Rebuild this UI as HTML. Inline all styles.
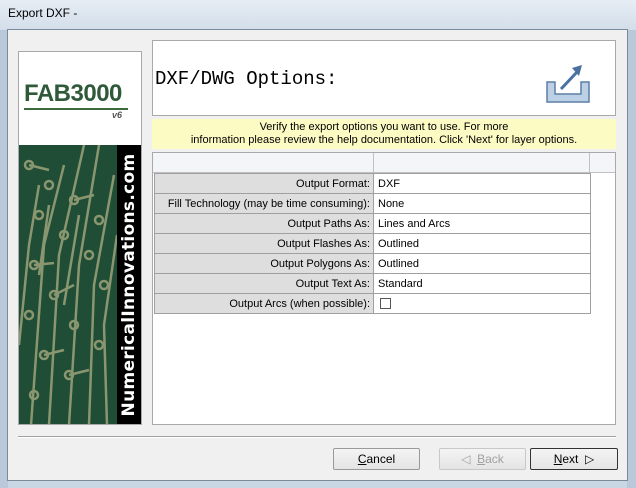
<!DOCTYPE html>
<html><head><style>
*{margin:0;padding:0;box-sizing:border-box}
body{width:636px;height:488px;overflow:hidden;background:#c9d6e3;font-family:"Liberation Sans",sans-serif;font-size:11px;position:relative}
.abs{position:absolute}
.btn{position:absolute;top:448px;height:22px;border:1px solid #9a9a9a;background:linear-gradient(#f4f4f4,#e4e4e4);text-align:center;line-height:20px;font-size:12px;border-radius:2px}
.row{position:absolute;left:155px;width:436px;height:20px;border-bottom:1px solid #a0a0a0}
.row .l{position:absolute;left:0;width:219px;height:19px;background:#dedede;text-align:right;padding-right:3px;line-height:20px;border-right:1px solid #a0a0a0}
.row .v{position:absolute;left:220px;width:216px;height:19px;background:#fff;padding-left:3px;line-height:20px;border-right:1px solid #a0a0a0}
</style></head><body>
<div class="abs" style="left:0;top:0;width:636px;height:30px;background:linear-gradient(#e6edf4,#d3deea)"></div>
<div class="abs" style="left:8px;top:6px;font-size:12px;color:#000">Export DXF -</div>
<div class="abs" style="left:0;top:30px;width:8px;height:458px;background:#b9c9d9"></div>
<div class="abs" style="left:627px;top:30px;width:9px;height:458px;background:#b9c9d9"></div>
<div class="abs" style="left:7px;top:29px;width:621px;height:452px;background:#f0f0f0;border:1px solid #7a8a9a"></div>
<div class="abs" style="left:18px;top:51px;width:124px;height:374px;border:1px solid #a9a9a9;background:#fff;overflow:hidden">
 <div class="abs" style="left:5px;top:28px;font-size:24px;font-weight:bold;color:#2f5a3a;letter-spacing:-0.5px">FAB3000</div>
 <div class="abs" style="left:5px;top:56px;width:104px;height:2px;background:#3a6a3e"></div>
 <div class="abs" style="left:93px;top:58px;font-size:9px;font-style:italic;font-weight:bold;color:#555">v6</div>
 <div class="abs" style="left:0;top:93px;width:98px;height:280px;background:#1f4d35">
  <svg width="98" height="280" style="position:absolute;left:0;top:0" fill="none" stroke="#8a9670" stroke-width="2.5">
   <path d="M80 0 L60 120 L50 280 M65 0 L40 110 L30 280 M45 20 L25 100 L12 280 M20 40 L10 100 L0 200 M95 30 L75 140 L70 280 M98 90 L85 180 L88 280 M30 60 L20 130 M60 70 L45 160 M10 20 L30 25 M55 55 L75 50 M15 120 L35 118 M35 150 L55 140 M50 230 L70 225 M25 210 L45 205"/>
   <circle cx="10" cy="20" r="4"/><circle cx="30" cy="40" r="4"/><circle cx="55" cy="55" r="4"/><circle cx="20" cy="70" r="4"/><circle cx="80" cy="75" r="4"/><circle cx="45" cy="90" r="4"/><circle cx="15" cy="120" r="4"/><circle cx="70" cy="110" r="4"/><circle cx="35" cy="150" r="4"/><circle cx="85" cy="140" r="4"/><circle cx="10" cy="170" r="4"/><circle cx="55" cy="180" r="4"/><circle cx="25" cy="210" r="4"/><circle cx="80" cy="200" r="4"/><circle cx="50" cy="230" r="4"/><circle cx="15" cy="250" r="4"/>
  </svg>
 </div>
 <div class="abs" style="left:98px;top:93px;width:24px;height:280px;background:#000"></div>
 <div class="abs" style="left:110px;top:233px;width:0;height:0">
  <div style="position:absolute;transform:translate(-50%,-50%) rotate(-90deg);white-space:nowrap;color:#fff;font-weight:bold;font-size:17px;font-family:'DejaVu Sans',sans-serif;letter-spacing:0.3px">NumericalInnovations.com</div>
 </div>
</div>
<div class="abs" style="left:152px;top:40px;width:464px;height:76px;background:#fff;border:1px solid #a9a9a9"></div>
<div class="abs" style="left:155px;top:68px;font-family:'Liberation Mono',monospace;font-size:19px">DXF/DWG Options:</div>
<svg class="abs" style="left:544px;top:62px" width="50" height="44" fill="none">
 <path d="M3 20 v20 h42 v-20 h-8 v12 h-26 v-12 z" fill="#bcd0e6" stroke="#5c7fa6" stroke-width="1.5"/>
 <path d="M17 27 L34 9" stroke="#4a72a0" stroke-width="3"/>
 <path d="M28 6 L38 3 L35 14 z" fill="#4a72a0"/>
</svg>
<div class="abs" style="left:152px;top:119px;width:464px;height:30px;background:#fdfbc4;text-align:center;font-size:11px;line-height:13px;padding-top:2px">Verify the export options you want to use. For more<br>information please review the help documentation. Click 'Next' for layer options.</div>
<div class="abs" style="left:152px;top:152px;width:464px;height:273px;background:#fff;border:1px solid #a9a9a9"></div>
<div class="abs" style="left:153px;top:153px;width:462px;height:20px;background:#f3f5f8;border-bottom:1px solid #c0c0c0"></div>
<div class="abs" style="left:373px;top:153px;width:1px;height:20px;background:#c0c0c0"></div>
<div class="abs" style="left:589px;top:153px;width:1px;height:20px;background:#c0c0c0"></div>
<div class="abs" style="left:154px;top:173px;width:437px;height:1px;background:#a0a0a0"></div>
<div class="abs" style="left:154px;top:173px;width:1px;height:141px;background:#a0a0a0"></div>
<div class="row" style="top:174px"><div class="l">Output Format:</div><div class="v">DXF</div></div>
<div class="row" style="top:194px"><div class="l">Fill Technology (may be time consuming):</div><div class="v">None</div></div>
<div class="row" style="top:214px"><div class="l">Output Paths As:</div><div class="v">Lines and Arcs</div></div>
<div class="row" style="top:234px"><div class="l">Output Flashes As:</div><div class="v">Outlined</div></div>
<div class="row" style="top:254px"><div class="l">Output Polygons As:</div><div class="v">Outlined</div></div>
<div class="row" style="top:274px"><div class="l">Output Text As:</div><div class="v">Standard</div></div>
<div class="row" style="top:294px"><div class="l">Output Arcs (when possible):</div><div class="v"><span style="display:inline-block;width:11px;height:11px;border:1px solid #555;margin-top:4px;margin-left:2px"></span></div></div>
<div class="abs" style="left:18px;top:436px;width:598px;height:1px;background:#a0a0a0"></div>
<div class="abs" style="left:18px;top:437px;width:598px;height:1px;background:#fff"></div>
<div class="btn" style="left:333px;width:87px"><u>C</u>ancel</div>
<div class="btn" style="left:439px;width:87px;color:#a0a0a0;border-color:#c8c8c8">&#9665;&nbsp; <u>B</u>ack</div>
<div class="btn" style="left:530px;width:88px;border-color:#333"><u>N</u>ext &nbsp;&#9655;</div>
</body></html>
